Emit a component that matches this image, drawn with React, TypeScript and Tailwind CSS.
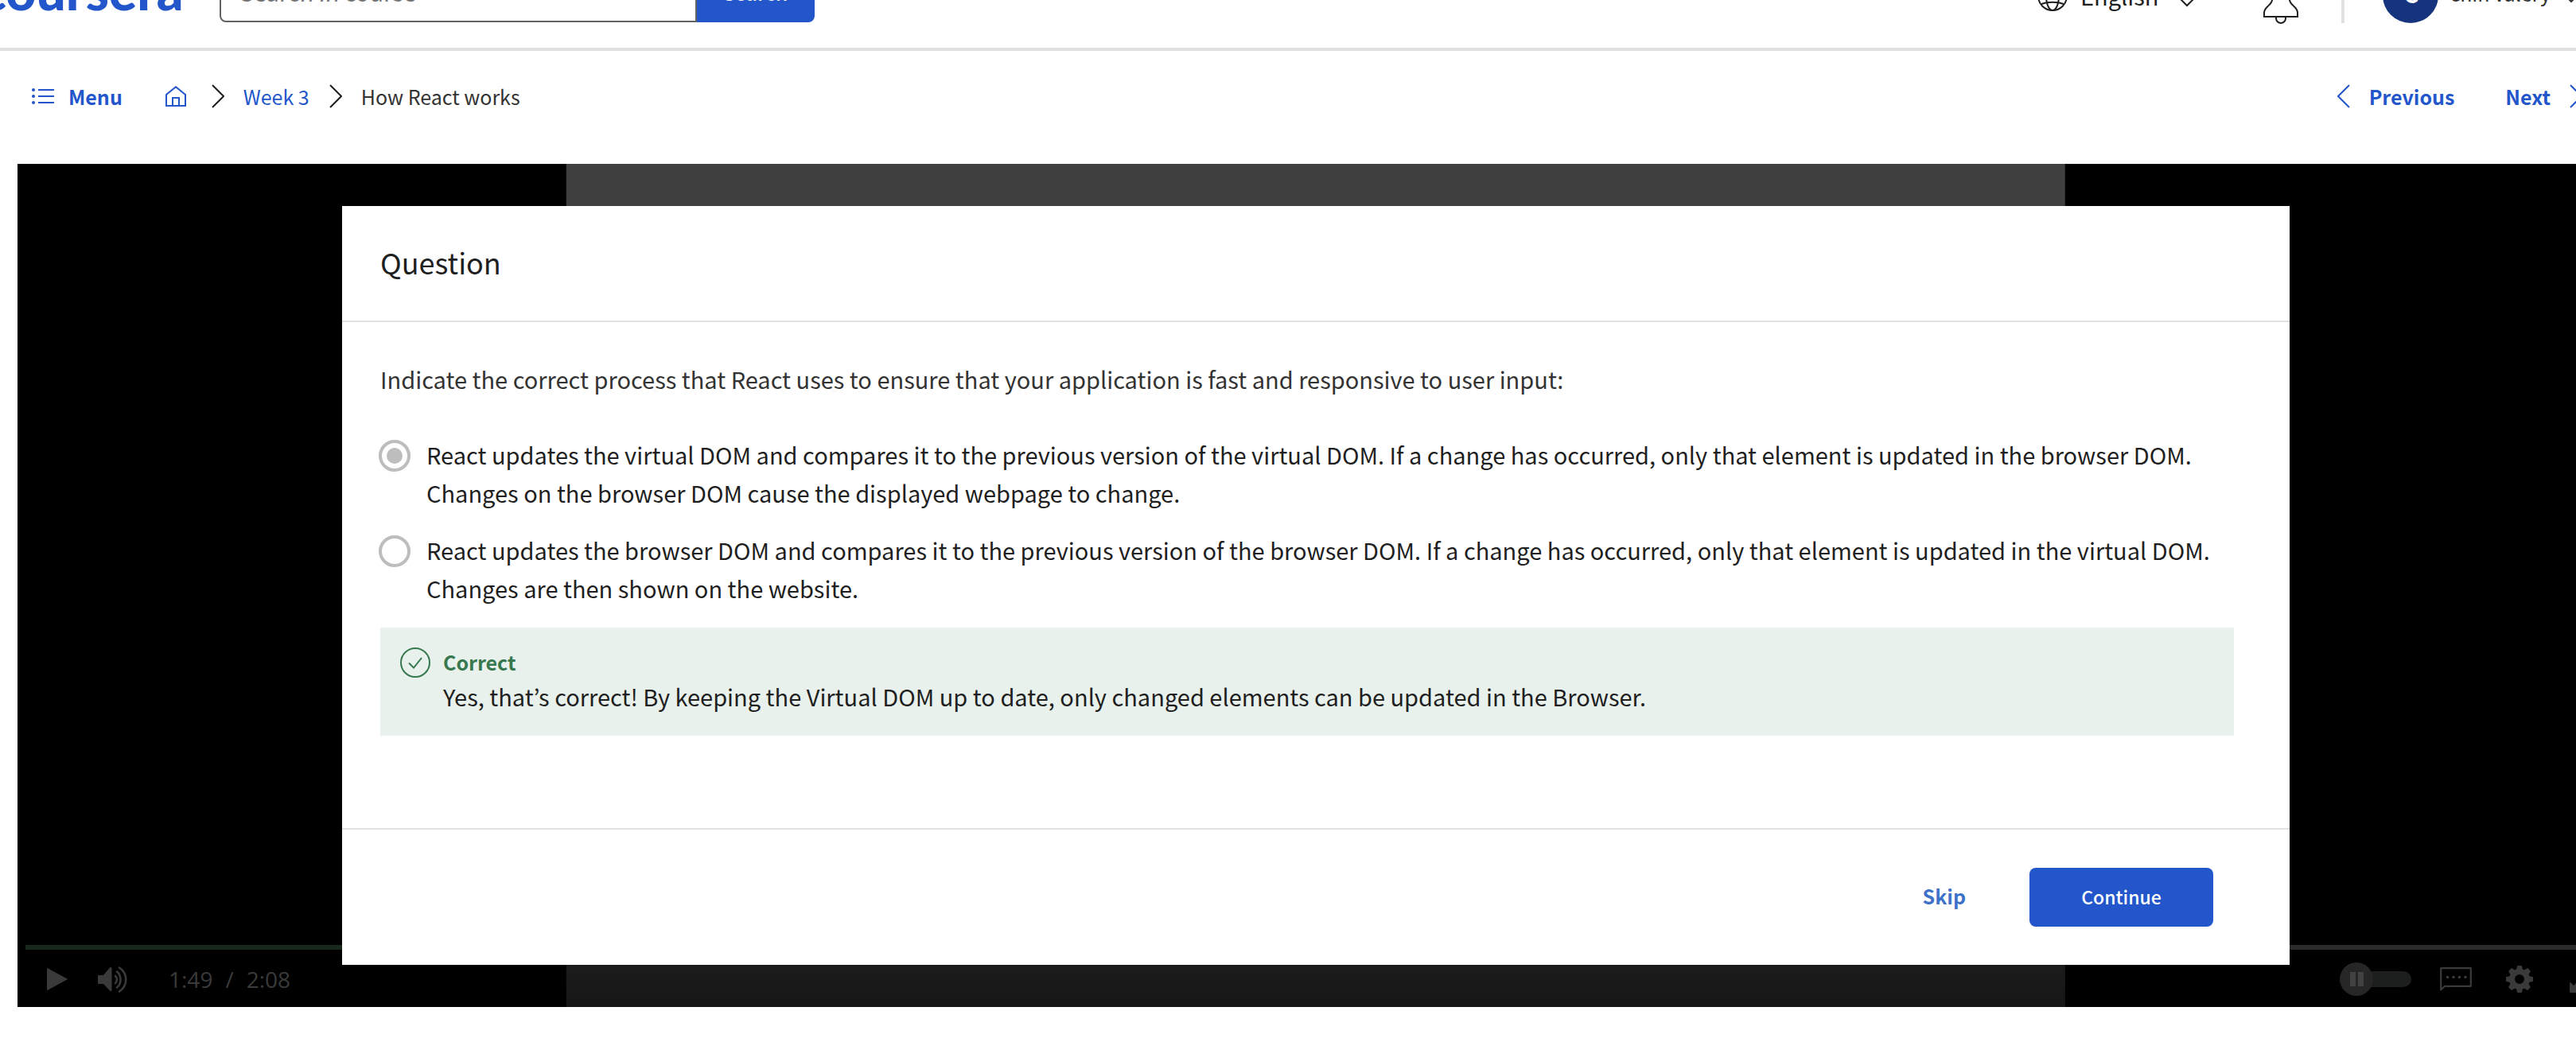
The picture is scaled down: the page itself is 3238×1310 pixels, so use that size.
import { useState } from 'react';

type IconProps = { className?: string };

function GlobeIcon({ className }: IconProps) {
  return (
    <svg viewBox="0 0 38 38" fill="none" stroke="currentColor" strokeWidth="2" className={className} aria-hidden="true">
      <circle cx="19" cy="19" r="18" />
      <ellipse cx="19" cy="19" rx="8" ry="18" />
      <path d="M1 19h36M5 10c8 3 20 3 28 0M5 29c8-3 20-3 28 0" />
    </svg>
  );
}

function BellIcon({ className }: IconProps) {
  return (
    <svg viewBox="0 0 44 64" fill="none" stroke="currentColor" strokeWidth="2" className={className} aria-hidden="true">
      <path d="M1 55v-5c0-3 1.500-5 4-7.500 3.500-3.500 6.500-5.500 6.500-12.500v-9C11.500 13 16 9 22 9s10.500 4 10.500 12v9c0 7 3 9 6.500 12.500 2.500 2.500 4 4.500 4 7.500v5z" />
      <path d="M22 9V3" />
      <path d="M16 55v2a6 6 0 0 0 12 0v-2" />
    </svg>
  );
}

function ChevronDown({ className }: IconProps) {
  return (
    <svg viewBox="0 0 20 12" fill="none" stroke="currentColor" strokeWidth="2" className={className} aria-hidden="true">
      <path d="M1 1l9 9 9-9" />
    </svg>
  );
}

function ChevronRight({ className }: IconProps) {
  return (
    <svg viewBox="0 0 16 30" fill="none" stroke="currentColor" strokeWidth="2" className={className} aria-hidden="true">
      <path d="M1 1l14 14L1 29" />
    </svg>
  );
}

function ChevronLeft({ className }: IconProps) {
  return (
    <svg viewBox="0 0 16 30" fill="none" stroke="currentColor" strokeWidth="2" className={className} aria-hidden="true">
      <path d="M15 1L1 15l14 14" />
    </svg>
  );
}

function ListIcon({ className }: IconProps) {
  return (
    <svg viewBox="0 0 28 20" fill="currentColor" className={className} aria-hidden="true">
      <circle cx="2" cy="2" r="2" />
      <circle cx="2" cy="10" r="2" />
      <circle cx="2" cy="18" r="2" />
      <path d="M8 1h20v2H8zM8 9h20v2H8zM8 17h20v2H8z" />
    </svg>
  );
}

function HomeIcon({ className }: IconProps) {
  return (
    <svg viewBox="0 0 26 26" fill="none" stroke="currentColor" strokeWidth="2" className={className} aria-hidden="true">
      <path d="M1 25V11L13 1.200 25 11v14z" />
      <path d="M9 25V15h8v10" />
    </svg>
  );
}

function CheckCircleIcon({ className }: IconProps) {
  return (
    <svg viewBox="0 0 38 38" fill="none" stroke="currentColor" strokeWidth="2" className={className} aria-hidden="true">
      <circle cx="19" cy="19" r="18" />
      <path d="M11 19.500l6 6L27 13" />
    </svg>
  );
}

function PlayIcon({ className }: IconProps) {
  return (
    <svg viewBox="0 0 26 28" fill="currentColor" className={className} aria-hidden="true">
      <path d="M0 1c0-.8.8-1 1.400-.6l24 13c.7.400.7.800 0 1.200l-24 13c-.6.400-1.400.200-1.400-.6z" />
    </svg>
  );
}

function VolumeIcon({ className }: IconProps) {
  return (
    <svg viewBox="0 0 38 34" className={className} aria-hidden="true">
      <path fill="currentColor" d="M1 12h6l8-9.500c1-1 2.500-.6 2.500.8v27.400c0 1.400-1.500 1.800-2.500.8L7 23H1c-.6 0-1-.4-1-1v-9c0-.6.4-1 1-1z" />
      <path
        fill="none"
        stroke="currentColor"
        strokeWidth="2.600"
        strokeLinecap="round"
        d="M22 13c2.600 2.400 2.600 6.600 0 9M24 7.500c6 5 6 15 0 20M27 2.500c11 7.500 11 22.500 0 30"
      />
    </svg>
  );
}

function CaptionsIcon({ className }: IconProps) {
  return (
    <svg viewBox="0 0 40 30" className={className} aria-hidden="true">
      <path fill="none" stroke="currentColor" strokeWidth="2.200" strokeLinejoin="round" d="M1.200 1.200h37.600v22.600H6l-4.800 4.600z" />
      <g fill="currentColor">
        <circle cx="9.500" cy="12.500" r="1.800" />
        <circle cx="17" cy="12.500" r="1.800" />
        <circle cx="24.500" cy="12.500" r="1.800" />
        <circle cx="32" cy="12.500" r="1.800" />
      </g>
    </svg>
  );
}

function GearIcon({ className }: IconProps) {
  return (
    <svg viewBox="-17 -17 34 34" className={className} fill="currentColor" aria-hidden="true">
      <path
        fillRule="evenodd"
        d="M0-13a13 13 0 1 0 0 26 13 13 0 0 0 0-26zM0-6A6 6 0 1 1 0 6 6 6 0 0 1 0-6z"
      />
      {[0, 45, 90, 135, 180, 225, 270, 315].map((angle) => (
        <path key={angle} d="M-4.200-11L-3-16.300Q-2.800-17-2-17H2Q2.800-17 3-16.300L4.200-11z" transform={`rotate(${angle})`} />
      ))}
    </svg>
  );
}

function FullscreenIcon({ className }: IconProps) {
  return (
    <svg viewBox="0 0 34 34" fill="currentColor" className={className} aria-hidden="true">
      <path d="M0 33V22l1-1 4 4 6-6 4 4-6 6 4 4-1 1H1z" />
      <path d="M34 1v11l-1 1-4-4-6 6-4-4 6-6-4-4 1-1h11z" />
    </svg>
  );
}

function SiteHeader() {
  return (
    <header className="-mt-[72px] flex h-[136px] items-center border-b-4 border-[#e1e1e1] pr-11">
      <a href="#home" className="-ml-6 pb-3 font-['Lato',sans-serif] text-[66px] leading-[80px] font-black text-[#2356cb]">
        coursera
      </a>
      <form className="ml-[45px] flex h-[68px] w-[748px]" onSubmit={(event) => event.preventDefault()}>
        <input
          type="text"
          aria-label="Search in course"
          placeholder="Search in course"
          className="min-w-0 flex-1 rounded-l-lg border-2 border-[#636363] pb-2 pl-6 text-[29px] placeholder:text-[#757575]"
        />
        <button type="submit" className="w-[148px] rounded-r-lg bg-[#2356cb] pb-1.5 text-[25px] font-medium text-white">
          Search
        </button>
      </form>
      <div className="ml-auto flex items-center text-[#1f1f1f]">
        <button type="button" className="flex items-center pt-0.5 text-[29px]">
          <GlobeIcon className="mr-4 size-[38px]" />
          English
          <ChevronDown className="mt-4 ml-[26px] h-3 w-5" />
        </button>
        <button type="button" aria-label="Notifications" className="ml-[86px] pt-2">
          <BellIcon className="h-16 w-11" />
        </button>
        <span className="ml-[54px] h-[70px] w-1 bg-[#e1e1e1]" />
        <button type="button" className="ml-12 flex items-center text-[25px] text-[#333]">
          <span className="flex size-[70px] items-center justify-center rounded-full bg-[#16347e] pb-1 text-[29px] font-bold text-white">
            C
          </span>
          <span className="ml-[14px] pb-1">chin valery</span>
          <ChevronDown className="mt-2 ml-4 h-3 w-5" />
        </button>
      </div>
    </header>
  );
}

function LessonNav() {
  return (
    <nav className="flex justify-between pt-9 pr-10 pb-16 pl-10 text-[25px] leading-[42px] text-[#2356cb]">
      <div className="flex items-center">
        <button type="button" className="flex items-center gap-[18px] font-bold">
          <ListIcon className="h-5 w-7" />
          Menu
        </button>
        <a href="#course" aria-label="Course home" className="ml-[54px]">
          <HomeIcon className="size-[26px]" />
        </a>
        <ChevronRight className="ml-8 h-[30px] w-4 text-[#1f1f1f]" />
        <a href="#week-3" className="ml-6">
          Week 3
        </a>
        <ChevronRight className="ml-[25px] h-[30px] w-4 text-[#1f1f1f]" />
        <span className="ml-6 text-[#333]">How React works</span>
      </div>
      <div className="flex items-center gap-16 font-bold">
        <a href="#previous" className="flex items-center gap-6">
          <ChevronLeft className="h-[30px] w-4" />
          Previous
        </a>
        <a href="#next" className="flex items-center gap-6">
          Next
          <ChevronRight className="h-[30px] w-4" />
        </a>
      </div>
    </nav>
  );
}

const options = [
  'React updates the virtual DOM and compares it to the previous version of the virtual DOM. If a change has occurred, only that element is updated in the browser DOM. Changes on the browser DOM cause the displayed webpage to change.',
  'React updates the browser DOM and compares it to the previous version of the browser DOM. If a change has occurred, only that element is updated in the virtual DOM. Changes are then shown on the website.',
];

function QuestionDialog() {
  const [selected, setSelected] = useState(0);
  return (
    <section role="dialog" aria-labelledby="dialog-title" className="relative w-3/4 bg-white text-[#1f1f1f]">
      <header className="flex h-[146px] items-center border-b-2 border-[#e1e1e1] px-12 pb-1">
        <h2 id="dialog-title" className="text-[36px]">
          Question
        </h2>
      </header>
      <div className="pt-[47px] pr-[70px] pb-[116px] pl-12 text-[29px] leading-[48px]">
        <fieldset>
          <legend className="mb-[47px] text-[#333]">
            Indicate the correct process that React uses to ensure that your application is fast and responsive to user
            input:
          </legend>
          <div className="flex flex-col gap-6">
            {options.map((option, index) => (
              <label key={option} className="-ml-0.5 flex items-start gap-5">
                <input
                  type="radio"
                  name="answer"
                  checked={selected === index}
                  onChange={() => setSelected(index)}
                  className="mt-1.5 size-10 shrink-0 appearance-none rounded-full border-4 border-[#bdbdbd] bg-clip-content p-1.5 checked:bg-[#bdbdbd]"
                />
                <span>{option}</span>
              </label>
            ))}
          </div>
        </fieldset>
        <div className="mt-[26px] flex gap-4 bg-[#e8f1ec] pt-[23px] pr-6 pb-[27px] pl-[25px]">
          <CheckCircleIcon className="mt-0.5 size-[38px] shrink-0 text-[#37784f]" />
          <div>
            <p className="text-[25px] leading-10 font-bold text-[#37784f]">Correct</p>
            <p className="leading-[46px]">
              Yes, that’s correct! By keeping the Virtual DOM up to date, only changed elements can be updated in the
              Browser.
            </p>
          </div>
        </div>
      </div>
      <footer className="flex items-center justify-end gap-20 border-t-2 border-[#e1e1e1] py-12 pr-24">
        <button type="button" className="pb-0.5 text-[25px] font-bold text-[#3d72c8]">
          Skip
        </button>
        <button type="button" className="h-[74px] w-[231px] rounded-lg bg-[#2356cb] pb-0.5 text-[23px] font-medium text-white">
          Continue
        </button>
      </footer>
    </section>
  );
}

function PlayerControls() {
  return (
    <div className="absolute inset-x-0 bottom-0 text-[#3a3a3a]">
      <div className="mx-2.5 flex h-1.5 bg-[#2b2b2b]">
        <div className="w-5/6 bg-[#16291b]" />
      </div>
      <div className="flex h-[72px] items-center justify-between pt-0.5 pr-[22px] pl-[37px]">
        <div className="flex items-center">
          <button type="button" aria-label="Play">
            <PlayIcon className="h-7 w-[26px]" />
          </button>
          <button type="button" aria-label="Mute" className="ml-[38px]">
            <VolumeIcon className="h-[34px] w-[38px]" />
          </button>
          <div className="ml-[51px] flex gap-4 font-['Open_Sans',sans-serif] text-[28px]">
            <span>1:49</span>
            <span>/</span>
            <span>2:08</span>
          </div>
        </div>
        <div className="flex items-center">
          <button type="button" role="switch" aria-checked="false" aria-label="Autoplay" className="flex h-5 w-[90px] items-center rounded-full bg-[#1d1f1e]">
            <span className="flex size-[42px] items-center justify-center gap-[3px] rounded-full bg-[#262626]">
              <span className="h-[18px] w-[7px] bg-[#424242]" />
              <span className="h-[18px] w-[7px] bg-[#424242]" />
            </span>
          </button>
          <button type="button" aria-label="Subtitles" className="ml-9">
            <CaptionsIcon className="h-[30px] w-10" />
          </button>
          <button type="button" aria-label="Settings" className="ml-[43px]">
            <GearIcon className="size-[34px]" />
          </button>
          <button type="button" aria-label="Full screen" className="ml-[46px]">
            <FullscreenIcon className="size-[34px]" />
          </button>
        </div>
      </div>
    </div>
  );
}

export default function App() {
  return (
    <div className="overflow-x-clip bg-white pb-11 font-['Noto_Sans_CJK_KR','Noto_Sans',sans-serif]">
      <div className="-mr-12">
        <SiteHeader />
        <LessonNav />
        <main className="relative ml-[22px] flex justify-center bg-black py-[53px]">
          <div className="absolute inset-y-0 left-1/2 aspect-video -translate-x-1/2 bg-[linear-gradient(to_bottom,#404040_80%,#1c1c1c_95%,#161616)]" />
          <PlayerControls />
          <QuestionDialog />
        </main>
      </div>
    </div>
  );
}
